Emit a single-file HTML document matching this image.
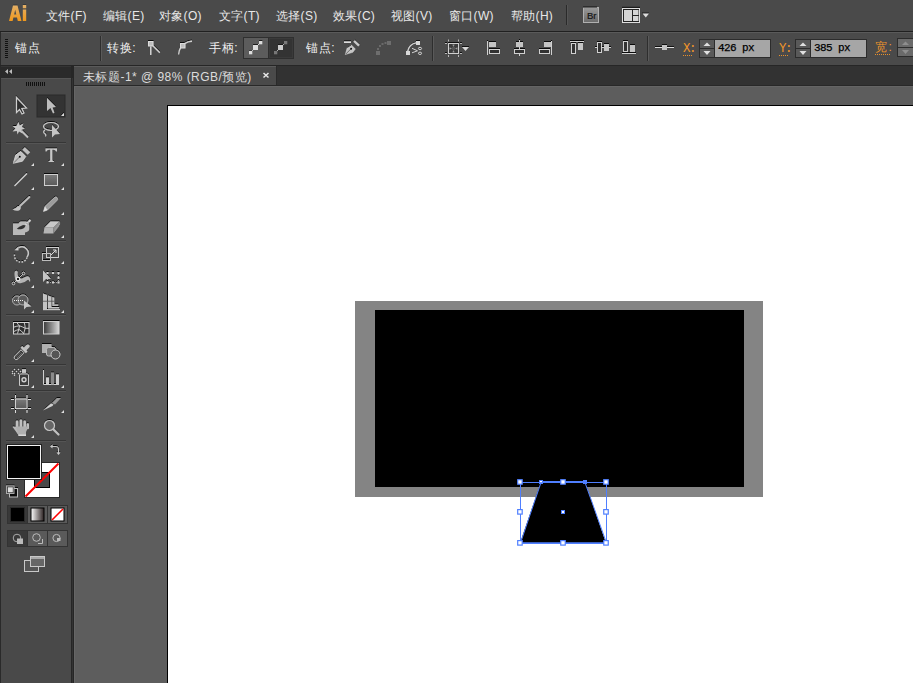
<!DOCTYPE html>
<html><head><meta charset="utf-8">
<style>
*{margin:0;padding:0;box-sizing:border-box}
html,body{width:913px;height:683px;overflow:hidden;background:#4a4a4a;font-family:"Liberation Sans",sans-serif;}
.a{position:absolute}
.t{position:absolute;font-size:12px;line-height:14px;color:#e8e8e8;white-space:nowrap}
.m{letter-spacing:0.3px}
.c{letter-spacing:0.6px}
svg{position:absolute;overflow:visible}
</style></head><body>
<!-- menu bar -->
<div class="a" style="left:0;top:0;width:913px;height:31px;background:#4a4a4a"></div>
<div class="a" style="left:0;top:31px;width:913px;height:1px;background:#202020"></div>
<svg style="left:0;top:0" width="40" height="30"><defs><linearGradient id="aig" x1="0" x2="0" y1="0" y2="1"><stop offset="0" stop-color="#e3b068"/><stop offset="1" stop-color="#f0981c"/></linearGradient></defs>
<path d="M9 4.5 H28 V5.5 H9 Z" fill="none"/>
<rect x="13" y="4.5" width="4.5" height="1" fill="#2a2e36" opacity="0.6"/><rect x="22.8" y="4" width="3.4" height="1" fill="#2a2e36" opacity="0.6"/>
<path fill-rule="evenodd" fill="url(#aig)" d="M9 21 L13 5.5 H17.5 L21.5 21 H17.8 L17 17.5 H13.4 L12.6 21 Z M14.1 14.6 H16.3 L15.2 9.8 Z M22.8 5 H26.2 V8.3 H22.8 Z M22.8 9.5 H26.2 V21 H22.8 Z"/></svg>
<div class="t m" style="left:46px;top:9px">文件(F)</div>
<div class="t m" style="left:103px;top:9px">编辑(E)</div>
<div class="t m" style="left:159px;top:9px">对象(O)</div>
<div class="t m" style="left:219px;top:9px">文字(T)</div>
<div class="t m" style="left:276px;top:9px">选择(S)</div>
<div class="t m" style="left:333px;top:9px">效果(C)</div>
<div class="t m" style="left:391px;top:9px">视图(V)</div>
<div class="t m" style="left:449px;top:9px">窗口(W)</div>
<div class="t m" style="left:511px;top:9px">帮助(H)</div>
<div class="a" style="left:566px;top:5px;width:1px;height:20px;background:#2a2a2a"></div>
<div class="a" style="left:567px;top:5px;width:1px;height:20px;background:#555"></div>


<svg style="left:0;top:0" width="913" height="31">
 <defs><linearGradient id="brg" x1="0" x2="0" y1="0" y2="1"><stop offset="0" stop-color="#9a9a9a"/><stop offset="1" stop-color="#6a6a6a"/></linearGradient></defs>
 <rect x="583.5" y="7.5" width="15" height="15" fill="url(#brg)" stroke="#b0b0b0" stroke-width="1"/>
 <text x="587" y="19" font-family="Liberation Sans" font-size="9.5" fill="#151515" stroke="#151515" stroke-width="0.2">Br</text><rect x="583" y="6.5" width="14" height="1" fill="#111"/><rect x="622" y="6.8" width="18" height="1" fill="#111"/><rect x="642" y="12.6" width="7" height="0.9" fill="#111"/>
 <rect x="622.5" y="8.5" width="17" height="14" fill="#222" stroke="#ddd" stroke-width="1"/>
 <rect x="624" y="10" width="8" height="11" fill="#d4d4d4"/>
 <rect x="633" y="10" width="5.5" height="5" fill="#d4d4d4"/>
 <rect x="633" y="16" width="5.5" height="5" fill="#d4d4d4"/>
 <path d="M642.5 13.5 H649 L645.75 17.5 Z" fill="#ddd"/>
</svg>

<!-- control bar -->
<div class="a" style="left:0;top:32px;width:913px;height:1px;background:#5a5a5a"></div>
<div class="a" style="left:0;top:33px;width:913px;height:32px;background:#4a4a4a"></div>
<div class="a" style="left:0;top:32px;width:1px;height:33px;background:#2a2a2a"></div>
<div class="a" style="left:0;top:65px;width:913px;height:1px;background:#262626"></div>


<!-- control bar content -->
<div class="a" style="left:5px;top:39px;width:3px;height:20px;background:repeating-linear-gradient(#111 0 1px,#4a4a4a 1px 2px)"></div>
<div class="t c" style="left:15px;top:40.5px;color:#f0f0f0">锚点</div>
<div class="a" style="left:100px;top:36px;width:1px;height:25px;background:#2e2e2e"></div>
<div class="a" style="left:101px;top:36px;width:1px;height:25px;background:#5a5a5a"></div>
<div class="t c" style="left:107px;top:40.5px;color:#f0f0f0">转换:</div>
<svg style="left:0;top:0" width="913" height="66">
 <g filter="url(#emb)">
 <!-- convert corner -->
 <rect x="148.5" y="41.5" width="4.5" height="4.5" fill="#bdbdbd" stroke="#dcdcdc" stroke-width="1"/>
 <rect x="150" y="46.5" width="1.5" height="8.5" fill="#d0d0d0"/>
 <line x1="153" y1="46" x2="159.8" y2="52.8" stroke="#d0d0d0" stroke-width="1.3"/>
 <!-- smooth -->
 <path d="M178.6 54.5 Q179 50 180.8 47.5" stroke="#d0d0d0" stroke-width="1.3" fill="none"/>
 <path d="M185 43.5 Q188 41.3 192 41.2" stroke="#d0d0d0" stroke-width="1.4" fill="none"/>
 <rect x="180.5" y="43.5" width="4.5" height="4.5" fill="#bdbdbd" stroke="#dcdcdc" stroke-width="1"/>
 </g>
 <!-- handles button group -->
 <rect x="243" y="37" width="51" height="22" fill="#2f2f2f"/>
 <rect x="244" y="38" width="24" height="20" fill="#5c5c5c"/>
 <rect x="269" y="38" width="24" height="20" fill="#333"/>
   <line x1="250" y1="53" x2="261" y2="42" stroke="#e6e6e6" stroke-width="0.9"/>
 <rect x="249" y="50.6" width="3.3" height="0.8" fill="#111"/>
 <rect x="253" y="44.2" width="5" height="0.8" fill="#111"/>
 <rect x="259" y="40.2" width="3.3" height="0.8" fill="#111"/>
 <rect x="249" y="51" width="3.3" height="3.3" fill="#ddd"/>
 <rect x="253" y="45" width="5" height="5" fill="#ddd"/>
 <rect x="259" y="41" width="3.3" height="3.3" fill="#ddd"/>
 <rect x="269.5" y="38.5" width="23" height="19" fill="none" stroke="#3a3a3a" stroke-width="1"/>
 <line x1="275" y1="53" x2="286" y2="42" stroke="#bbb" stroke-width="0.9"/>
 <rect x="278" y="44.2" width="5" height="0.8" fill="#111"/>
 <rect x="274" y="51" width="3.3" height="3.3" fill="#777"/>
 <rect x="278" y="45" width="5" height="5" fill="#ccc"/>
 <rect x="284" y="41" width="3.3" height="3.3" fill="#777"/>
<!-- pen add anchor -->
 <rect x="344" y="40.3" width="7" height="1" fill="#111"/>
 <rect x="344" y="41.3" width="7" height="1.7" fill="#dcdcdc"/>
 <path d="M345.3 54.5 L347.3 47.5 L351.2 44.8 L355.3 49 L352.8 52.3 Z" fill="#c4c4c4" stroke="#dedede" stroke-width="0.5"/>
 <path d="M347.3 47.5 L351.2 44.8" stroke="#111" stroke-width="0.8"/>
 <path d="M353 41.6 L354.8 39.6 L360.2 44.6 L358.2 46.5 Z" fill="#c8c8c8"/>
 <path d="M353 41.6 L354.8 39.6 M354.8 39.6 L360.2 44.6" stroke="#111" stroke-width="0.7" fill="none"/>
 <line x1="345.8" y1="54" x2="350.8" y2="49" stroke="#444" stroke-width="0.7"/>
 <circle cx="351.1" cy="48.7" r="1" fill="#111"/>
<!-- dashed curve disabled -->
 <rect x="376" y="51" width="4" height="4" fill="#6e6e6e"/>
 <rect x="387" y="41" width="4" height="4" fill="#6e6e6e"/>
 <rect x="377" y="48" width="2" height="2" fill="#6a6a6a"/>
 <rect x="379" y="45" width="2" height="2" fill="#6a6a6a"/>
 <rect x="381.5" y="43" width="2" height="2" fill="#6a6a6a"/>
 <rect x="384.5" y="42" width="2" height="2" fill="#6a6a6a"/>
<!-- cut path -->
 <path d="M407.8 51 Q409 44.5 416 42.8" stroke="#cfcfcf" stroke-width="1.1" fill="none"/>
 <path d="M407.8 50.2 Q409 43.5 416 42" stroke="#111" stroke-width="0.7" fill="none" opacity="0.8"/>
 <path d="M407.8 51 Q409 44.5 416 42.8" stroke="#cfcfcf" stroke-width="1.1" fill="none"/>
 <rect x="406" y="51" width="4" height="4" fill="#d8d8d8"/>
 <rect x="416" y="41" width="4" height="4" fill="#d8d8d8"/>
 <rect x="416" y="40" width="4" height="1" fill="#111"/>
 <path d="M412 48.3 L417.5 50.8 M412 52.8 L417.5 50.8" stroke="#d0d0d0" stroke-width="1"/>
 <ellipse cx="420" cy="48.5" rx="1.6" ry="1.2" stroke="#d0d0d0" fill="none" stroke-width="1"/>
 <ellipse cx="420" cy="53.3" rx="1.6" ry="1.2" stroke="#d0d0d0" fill="none" stroke-width="1"/>
<!-- transform -->
 <rect x="448" y="42" width="11" height="1" fill="#111"/>
 <rect x="448.5" y="43.5" width="10" height="10" fill="#3c3c3c" stroke="#cfcfcf" stroke-width="1"/>
 <rect x="452" y="47" width="3" height="3" fill="#555"/>
 <path d="M452.5 45h2 M453.5 45v1.5 M452.5 52h2 M453.5 50.5v1.5 M450 47.5v2 M450 48.5h1.5 M457 47.5v2 M455.5 48.5h1.5" stroke="#a8a8a8" stroke-width="0.8"/>
 <path d="M445 43.5h2 M460 43.5h2 M445 53.5h2 M460 53.5h2 M448.5 39.5v2 M458.5 39.5v2 M448.5 55v2 M458.5 55v2" stroke="#b8b8b8" stroke-width="1"/>
 <path d="M445 42.5h2 M460 42.5h2 M445 52.5h2 M460 52.5h2" stroke="#111" stroke-width="1"/>
 <rect x="462" y="46" width="7" height="1" fill="#111"/>
 <path d="M462 47 L469 47 L465.5 51 Z" fill="#d8d8d8"/>
<g filter="url(#emb)">
 <!-- align left -->
 <rect x="487" y="41" width="1" height="14" fill="#d0d0d0"/>
 <rect x="489" y="42" width="7" height="5" fill="#c4c4c4"/>
 <rect x="489.5" y="49.5" width="10" height="4" fill="#333" stroke="#d0d0d0" stroke-width="1"/>
 <!-- align hcenter -->
 <rect x="519" y="40" width="1" height="16" fill="#d0d0d0"/>
 <rect x="516" y="42" width="7" height="5" fill="#c4c4c4"/>
 <rect x="514.5" y="49.5" width="10" height="4" fill="#333" stroke="#d0d0d0" stroke-width="1"/>
 <!-- align right -->
 <rect x="551" y="41" width="1" height="14" fill="#d0d0d0"/>
 <rect x="544" y="42" width="7" height="5" fill="#c4c4c4"/>
 <rect x="539.5" y="49.5" width="10" height="4" fill="#333" stroke="#d0d0d0" stroke-width="1"/>
 <!-- align top -->
 <rect x="570" y="41" width="14" height="1" fill="#d0d0d0"/>
 <rect x="571.5" y="43.5" width="4" height="10" fill="#333" stroke="#d0d0d0" stroke-width="1"/>
 <rect x="578" y="43" width="5" height="7" fill="#c4c4c4"/>
 <!-- align vcenter -->
 <rect x="595" y="47" width="16" height="1" fill="#d0d0d0"/>
 <rect x="597.5" y="42.5" width="4" height="10" fill="#333" stroke="#d0d0d0" stroke-width="1"/>
 <rect x="604" y="44" width="5" height="7" fill="#c4c4c4"/>
 <!-- align bottom -->
 <rect x="622" y="53" width="14" height="1" fill="#d0d0d0"/>
 <rect x="623.5" y="41.5" width="4" height="10" fill="#333" stroke="#d0d0d0" stroke-width="1"/>
 <rect x="630" y="45" width="5" height="7" fill="#c4c4c4"/>
 </g>
 <!-- ref point -->
 <rect x="655" y="46" width="19" height="1" fill="#111"/>
 <rect x="655" y="47" width="19" height="1" fill="#e0e0e0"/>
 <rect x="662" y="44" width="5" height="1" fill="#111"/>
 <rect x="662" y="45" width="5" height="5" fill="#c4c4c4"/>
 <!-- X spinner -->
 <rect x="699" y="39" width="72" height="19" fill="#2c2c2c"/>
 <rect x="700" y="40" width="14" height="8" fill="#595959"/>
 <rect x="700" y="49" width="14" height="8" fill="#595959"/>
 <path d="M703.5 46 L710.5 46 L707 42.5 Z" fill="#e0e0e0"/>
 <path d="M703.5 51 L710.5 51 L707 55 Z" fill="#e0e0e0"/>
 <rect x="715" y="40" width="55" height="17" fill="#a6a6a6"/>
 <!-- Y spinner -->
 <rect x="795" y="39" width="72" height="19" fill="#2c2c2c"/>
 <rect x="796" y="40" width="14" height="8" fill="#595959"/>
 <rect x="796" y="49" width="14" height="8" fill="#595959"/>
 <path d="M799.5 46 L806.5 46 L803 42.5 Z" fill="#e0e0e0"/>
 <path d="M799.5 51 L806.5 51 L803 55 Z" fill="#e0e0e0"/>
 <rect x="811" y="40" width="55" height="17" fill="#a6a6a6"/>
  <!-- W spinner -->
 <rect x="897" y="38" width="17" height="19" fill="#2c2c2c"/>
 <rect x="898" y="39" width="15" height="8" fill="#6a6a6a"/>
 <rect x="898" y="48" width="15" height="8" fill="#6a6a6a"/>
 <path d="M902 45 L909 45 L905.5 41.5 Z" fill="#8e8e8e"/>
 <path d="M902 50 L909 50 L905.5 54 Z" fill="#8e8e8e"/>
<!-- orange dotted underlines -->
 <path d="M683 55.5h10 M779 55.5h10 M875 54.5h16" stroke="#e8902a" stroke-width="1" stroke-dasharray="1 1"/>
</svg>
<div class="t c" style="left:209px;top:40.5px;color:#f0f0f0">手柄:</div>
<div class="t c" style="left:306px;top:40.5px;color:#f0f0f0">锚点:</div>
<div class="a" style="left:432px;top:36px;width:1px;height:25px;background:#2e2e2e"></div>
<div class="a" style="left:433px;top:36px;width:1px;height:25px;background:#5a5a5a"></div>
<div class="a" style="left:647px;top:36px;width:1px;height:25px;background:#2e2e2e"></div>
<div class="a" style="left:648px;top:36px;width:1px;height:25px;background:#5a5a5a"></div>
<div class="t" style="left:683px;top:42px;color:#f0952a;font-family:'Liberation Mono',monospace;font-size:12.5px;letter-spacing:-1.6px">X:</div>
<div class="t" style="left:779px;top:42px;color:#f0952a;font-family:'Liberation Mono',monospace;font-size:12.5px;letter-spacing:-1.6px">Y:</div>
<div class="t" style="left:875px;top:40px;color:#f0952a;letter-spacing:1.5px">宽:</div>
<div class="t" style="left:718px;top:41px;color:#000;font-family:'Liberation Mono',monospace;font-size:11px;letter-spacing:-0.6px;-webkit-text-stroke:0.25px #000">426 px</div>
<div class="t" style="left:814px;top:41px;color:#000;font-family:'Liberation Mono',monospace;font-size:11px;letter-spacing:-0.6px;-webkit-text-stroke:0.25px #000">385 px</div>

<!-- tab bar -->
<div class="a" style="left:0;top:66px;width:913px;height:20px;background:#323232"></div>

<!-- left panel -->
<div class="a" style="left:0;top:66px;width:71px;height:617px;background:#494949"></div>
<div class="a" style="left:0;top:66px;width:1px;height:617px;background:#2a2a2a"></div>
<div class="a" style="left:1px;top:66px;width:70px;height:12px;background:#2a2a2a;border-top:1px solid #343434"></div><div class="a" style="left:1px;top:78px;width:70px;height:1px;background:#555"></div>
<div class="a" style="left:71px;top:66px;width:3px;height:617px;background:#262626"></div><div class="a" style="left:72px;top:78px;width:1px;height:605px;background:#333"></div>


<!-- toolbar content -->
<svg style="left:0;top:0" width="72" height="683">
<defs>
 <filter id="emb" x="-20%" y="-20%" width="140%" height="140%"><feOffset dy="-1" in="SourceAlpha" result="o"/><feFlood flood-color="#000" flood-opacity="0.85"/><feComposite in2="o" operator="in" result="s"/><feMerge><feMergeNode in="s"/><feMergeNode in="SourceGraphic"/></feMerge></filter>
 <linearGradient id="gr" x1="0" x2="1" y1="0" y2="0"><stop offset="0" stop-color="#3a3a3a"/><stop offset="1" stop-color="#d8d8d8"/></linearGradient>
 <linearGradient id="rg" x1="0" x2="0" y1="0" y2="1"><stop offset="0" stop-color="#7a7a7a"/><stop offset="1" stop-color="#5a5a5a"/></linearGradient>
 <linearGradient id="gw" x1="0" x2="1" y1="0" y2="0"><stop offset="0" stop-color="#fff"/><stop offset="1" stop-color="#2a2020"/></linearGradient>
</defs>
<!-- chevrons -->
<path d="M8 69 L5 71.5 L8 74 Z M12 69 L9 71.5 L12 74 Z" fill="#bbb"/>
<!-- grip -->

<path d="M26.5 82v4 M28.5 82v4 M30.5 82v4 M32.5 82v4 M34.5 82v4 M36.5 82v4 M38.5 82v4 M40.5 82v4 M42.5 82v4 M44.5 82v4" stroke="#111" stroke-width="1"/>
<!-- selected tool bg -->
<rect x="37" y="95" width="28" height="22" fill="#333" stroke="#2a2a2a" stroke-width="1"/>
<!-- separators -->
<g fill="#363636"><rect x="6" y="142" width="60" height="1"/><rect x="6" y="240" width="60" height="1"/><rect x="6" y="314" width="60" height="1"/><rect x="6" y="364" width="60" height="1"/><rect x="6" y="390" width="60" height="1"/><rect x="6" y="440" width="60" height="1"/></g><g fill="#555"><rect x="6" y="143" width="60" height="1"/><rect x="6" y="241" width="60" height="1"/><rect x="6" y="315" width="60" height="1"/><rect x="6" y="365" width="60" height="1"/><rect x="6" y="391" width="60" height="1"/><rect x="6" y="441" width="60" height="1"/></g>
<g filter="url(#emb)">
<!-- selection -->
<path d="M16.5 97.5 L16.5 112.5 L19.5 109.5 L22 114 L24 113 L21.8 108.5 L26.5 108 Z" fill="#2e2e2e" stroke="#cfcfcf" stroke-width="1.2" stroke-linejoin="miter"/>
<!-- direct selection -->
<path d="M47 98 L47 111 L50.5 108 L53 113.5 L54.5 112.8 L52.5 107.5 L56 107 Z" fill="#bdbdbd"/>
<path d="M61 116 L64 116 L64 113 Z" fill="#ddd"/>
<!-- magic wand -->
<path d="M18.5 122 L19.6 125.5 L23.5 123.5 L21.8 127 L25 128.5 L21.5 129.8 L22.5 133.5 L19 131.5 L17.5 134.5 L16.8 131 L12.5 131.5 L15.5 128.5 L12.5 126 L16.5 126 Z" fill="#c8c8c8"/>
<line x1="21.5" y1="131" x2="28" y2="137.5" stroke="#c0c0c0" stroke-width="1.8"/>
<!-- lasso -->
<ellipse cx="51" cy="126.5" rx="7.5" ry="4" fill="none" stroke="#c8c8c8" stroke-width="1.2"/>
<path d="M45 130 q-2.5 2 -0.5 3.5 q2 1 1 3" fill="none" stroke="#c8c8c8" stroke-width="1.1"/>
<path d="M52 125 L52 137.5 L55 134.5 L60 134 Z" fill="#c4c4c4"/>
<!-- pen -->
<path d="M13.3 163.3 L15.8 155 L20.8 151.5 L25.8 156.5 L22.5 161.2 Z" fill="#c0c0c0" stroke="#e0e0e0" stroke-width="0.7"/>
<path d="M22.3 149.7 L24.8 147.2 L30.2 152.2 L27.7 154.7 Z" fill="#bdbdbd"/>
<line x1="13.8" y1="162.8" x2="19.5" y2="157" stroke="#555" stroke-width="0.7"/>
<circle cx="19.8" cy="156.8" r="1" fill="#111"/>
<!-- type -->
<path d="M45.5 148.5 H57 V151.5 H56 Q55.5 149.8 53.5 149.8 H52.3 V160.3 Q52.3 161 54 161.2 V162 H48.5 V161.2 Q50.2 161 50.2 160.3 V149.8 H49 Q47 149.8 46.5 151.5 H45.5 Z" fill="#c8c8c8"/>
<!-- line -->
<line x1="14.5" y1="186" x2="27" y2="173.5" stroke="#cfcfcf" stroke-width="1.3"/>
<!-- rect -->
<rect x="44.5" y="174.5" width="13" height="11" fill="url(#rg)" stroke="#cfcfcf" stroke-width="1"/>
<!-- brush -->
<line x1="20" y1="206" x2="29.5" y2="197" stroke="#bdbdbd" stroke-width="1.8" stroke-linecap="round"/>
<path d="M12.5 209.5 Q16 208.5 18 206 L20.5 206.5 Q21.5 209 19 210.5 Q16 211.5 12.5 209.5 Z" fill="#c4c4c4"/>
<!-- pencil -->
<path d="M43.5 211.5 L45 206.5 L54.5 197.5 Q56 196.5 57 197.5 L57.5 198.5 Q58 199.5 57 200.5 L47.5 210 Z" fill="#9c9c9c" stroke="#ccc" stroke-width="0.6"/>
<path d="M43.5 211.5 L45 206.5 L47.5 210 Z" fill="#ddd"/>
<!-- blob brush -->
<path d="M13 223.5 H18.5 Q19.5 221.5 21 221.5 H26 Q29.2 222.5 29.2 226 V229.5 Q29 231.5 25 232.5 V235 H13 Z" fill="#b8b8b8"/>
<path d="M16.8 228.8 Q19 226.5 22.5 225.2 Q24.5 224.8 25.8 225.6 Q25 228 22 229 Q19 229.8 16.8 228.8 Z" fill="#333"/>
<path d="M25.5 225 L30.5 220" stroke="#cfcfcf" stroke-width="2"/>
<path d="M26.5 223 L28 224.5 M28 221.5 L29.5 223" stroke="#555" stroke-width="0.6"/>
<!-- eraser -->
<path d="M44.5 227.5 L50.5 221.5 H59.5 L53.5 227.5 Z" fill="#c8c8c8"/>
<path d="M43.5 233.5 L44.5 227.5 H53.5 V233.5 Z" fill="#b4b4b4"/>
<path d="M53.5 227.5 L59.5 221.5 Q60.5 222.5 60 224.5 L53.5 233.5 Z" fill="#8e8e8e"/>
<path d="M55 229.5 L59.5 224 M54.5 231.5 L59 226" stroke="#aaa" stroke-width="0.5"/>
<!-- rotate -->
<path d="M18.5 248 A6.3 6.3 0 0 1 27 257" fill="none" stroke="#c8c8c8" stroke-width="1.4"/>
<path d="M27 257.5 A6.3 6.3 0 0 1 14.7 254" fill="none" stroke="#c8c8c8" stroke-width="1.4" stroke-dasharray="1.6 1.3"/>
<path d="M14.5 250.2 L18.5 246.5 L18.5 250.5 Z" fill="#cfcfcf"/>
<!-- scale -->
<rect x="46.5" y="247.5" width="12" height="10" fill="#4a4a4a" stroke="#cfcfcf" stroke-width="1"/>
<rect x="42.5" y="253.5" width="8" height="7" fill="none" stroke="#bdbdbd" stroke-width="1"/>
<path d="M51 255 L56 250 M53 250 H56 V253" stroke="#dcdcdc" stroke-width="1" fill="none"/>
<!-- warp -->
<path d="M14.5 274 Q14.5 270.5 16.5 270.8 Q18.5 271.5 17.5 274 Q18.5 279.5 22 278.5 Q25.5 276.5 27.5 276.3 Q30.5 276.5 30.2 281.5 L29.2 281.5 Q29 279 27.5 280 Q23.5 284 18.5 283 Q14.5 281.5 14.5 274 Z" fill="#b4b4b4"/>
<line x1="13.5" y1="283.5" x2="23.5" y2="273.5" stroke="#ddd" stroke-width="0.8"/>
<circle cx="18" cy="279" r="1.8" fill="#222" stroke="#eee" stroke-width="1.1"/>
<circle cx="13.5" cy="283.5" r="1.3" fill="#333" stroke="#ddd" stroke-width="0.8"/>
<circle cx="23.5" cy="273.5" r="1.3" fill="#333" stroke="#ddd" stroke-width="0.8"/>
<!-- free transform -->
<rect x="47.5" y="273" width="11" height="9.5" fill="none" stroke="#bdbdbd" stroke-width="0.8" stroke-dasharray="1 1"/>
<g fill="#cfcfcf"><rect x="46.5" y="272" width="2" height="2"/><rect x="52" y="272" width="2" height="2"/><rect x="57.5" y="272" width="2" height="2"/><rect x="57.5" y="276.8" width="2" height="2"/><rect x="46.5" y="281.5" width="2" height="2"/><rect x="52" y="281.5" width="2" height="2"/><rect x="57.5" y="281.5" width="2" height="2"/></g>
<path d="M43 270.5 L43 282 L46 279 L51 279 Z" fill="#c4c4c4"/>
<!-- shape builder -->
<circle cx="17" cy="300.5" r="4.5" fill="#555" stroke="#b0b0b0" stroke-width="1"/>
<circle cx="23" cy="300" r="5" fill="#5a5a5a" stroke="#b0b0b0" stroke-width="1"/>
<path d="M14 300.5 H24" stroke="#eee" stroke-width="1" stroke-dasharray="1 1"/>
<path d="M24 300.5 L24 309.5 L26.5 307 L31.5 306.5 Z" fill="#c4c4c4"/>
<!-- perspective grid -->
<g fill="#c4c4c4">
<path d="M43 293.5 L47 295 V309 H43 Z"/>
<path d="M48 295.5 L51.4 296.8 V307 H48 Z"/>
<path d="M52.3 297 L54.3 297.8 V304.5 H52.3 Z"/>
<rect x="52.3" y="304.5" width="6" height="1.4"/>
<rect x="48" y="307" width="11.2" height="1.4"/>
<rect x="43" y="309" width="17" height="1.2"/>
</g>
<rect x="43" y="300.8" width="11.3" height="0.8" fill="#555"/>
<!-- mesh -->
<rect x="13.5" y="322.5" width="15.5" height="11.5" fill="#2e2e2e" stroke="#d0d0d0" stroke-width="1"/>
<path d="M17 322.5 Q18 325 19.5 325.8 Q23 327 25.2 328.3 H29 M13.5 327.2 Q17 326 19.5 325.8 M19.5 325.8 Q19 329.5 17.5 333.5 M13.5 331.7 Q17 329.8 19 329.5 Q21.5 330.5 23.5 333.5 M24.2 322.5 Q25 325 25.2 328.3 Q24.5 331 23.5 334" stroke="#d8d8d8" stroke-width="0.9" fill="none"/>
<!-- gradient -->
<rect x="43.5" y="321.5" width="15.5" height="12.5" fill="url(#gr)" stroke="#cfcfcf" stroke-width="1"/>
<!-- eyedropper -->
<path d="M14.2 358.2 Q14 356.8 15 355.8 L21 349.8 L24 352.8 L18 358.8 Q17 359.8 15.6 359.6 Z" fill="#3a3a3a" stroke="#d0d0d0" stroke-width="0.9"/>
<path d="M15.5 357 L20.5 352 M17 358 L22 353" stroke="#999" stroke-width="0.5"/>
<path d="M20.5 347.8 L22.2 346.1 L27.6 351.5 L25.9 353.2 Z" fill="#c4c4c4"/>
<path d="M23.5 348 L26.5 345 Q28 343.8 29.2 345 Q30.4 346.2 29.2 347.6 L26.2 350.6 Z" fill="#c0c0c0"/>
<!-- blend -->
<rect x="42" y="344" width="9.5" height="9" fill="#b0b0b0"/>
<rect x="46.5" y="347.5" width="9" height="8.5" rx="2" fill="#777" stroke="#bdbdbd" stroke-width="1"/>
<circle cx="55.5" cy="354.5" r="4.5" fill="#555" stroke="#c8c8c8" stroke-width="1"/>
<!-- symbol sprayer -->
<g fill="#d0d0d0"><circle cx="14.5" cy="369.6" r="0.75"/><circle cx="18.5" cy="369.6" r="0.75"/><circle cx="12.5" cy="371.5" r="0.75"/><circle cx="16.5" cy="371.5" r="0.75"/><circle cx="20.5" cy="371.5" r="0.75"/><circle cx="14.5" cy="373.4" r="0.75"/><circle cx="18.5" cy="373.4" r="0.75"/><circle cx="12.5" cy="373.4" r="0.75"/><circle cx="14.5" cy="375.2" r="0.75"/></g>
<rect x="22" y="369.2" width="4" height="3.7" fill="#c8c8c8"/>
<path d="M19.5 375 L20.5 374 H27.5 L28.5 375 V385.5 H19.5 Z" fill="#3a3a3a" stroke="#c8c8c8" stroke-width="1"/>
<circle cx="24" cy="379.8" r="2" fill="#444" stroke="#d0d0d0" stroke-width="1.4"/>
<!-- column graph -->
<path d="M43.5 370 V384.5 H59" stroke="#cfcfcf" stroke-width="1" fill="none"/>
<rect x="46" y="377.5" width="3" height="7" fill="#cfcfcf"/>
<rect x="51" y="372.5" width="3" height="12" fill="#8a8a8a"/>
<rect x="56" y="374.5" width="3" height="10" fill="#cfcfcf"/>
<!-- artboard -->
<rect x="15.5" y="399" width="11.5" height="9.5" fill="url(#rg)" stroke="#cfcfcf" stroke-width="1"/>
<path d="M11 399.5h3 M28 399.5h3 M11 408.5h3 M28 408.5h3 M15.5 395v3 M27 395v3 M15.5 410v3 M27 410v3" stroke="#dcdcdc" stroke-width="1"/>
<!-- slice -->
<path d="M43 410.5 L51 403.5 L53.5 404.5 L52.5 406 Z" fill="#cfcfcf"/>
<path d="M52 403 L57 398 H61 L55 404.5 Z" fill="#9a9a9a"/>
<!-- hand -->
<g fill="#c0c0c0">
<rect x="15.8" y="420.5" width="2.6" height="9" rx="1.3"/>
<rect x="19.6" y="419.5" width="2.6" height="9" rx="1.3"/>
<rect x="23.4" y="420.5" width="2.6" height="9" rx="1.3"/>
<rect x="26.6" y="423.3" width="2.4" height="6" rx="1.2"/>
<path d="M12.5 427 Q13.5 425.8 15 427 L18 430 H16.5 Z"/>
<path d="M16 426.5 H28.5 L26 432 V435 H18.5 L16 431 Z" fill="#b0b0b0"/>
<path d="M12.8 427.2 L16 426.8 L18.5 435 Z" fill="#b8b8b8"/>
<rect x="18.3" y="434.5" width="7.7" height="1.5" fill="#d8d8d8"/>
</g>
<!-- zoom -->
<line x1="53" y1="429" x2="58.5" y2="434.5" stroke="#c0c0c0" stroke-width="2.2" stroke-linecap="round"/>
<circle cx="49.5" cy="425.5" r="5" fill="#666" stroke="#c8c8c8" stroke-width="1.2"/>
<!-- swap -->
<path d="M51 446.5 H56 Q58.5 446.5 58.5 449 V453" fill="none" stroke="#c8c8c8" stroke-width="1"/>
<path d="M50 446.5 L52.5 444.5 V448.5 Z M58.5 455 L56.5 452.5 H60.5 Z" fill="#c8c8c8"/>
<!-- default fill stroke -->
<rect x="9.5" y="488.5" width="8" height="8.5" fill="#111" stroke="#bdbdbd" stroke-width="1"/>
<rect x="6.5" y="486" width="7.5" height="7.5" fill="#333" stroke="#aaa" stroke-width="1"/>
<rect x="7.8" y="487.3" width="5" height="5" fill="#e0e0e0"/>
</g>
<!-- triangles -->
<g fill="#e0e0e0">
<path d="M31 166 H34 V163 Z M61 166 H64 V163 Z M31 190 H34 V187 Z M61 190 H64 V187 Z M61 215 H64 V212 Z M61 238 H64 V235 Z
 M31 264 H34 V261 Z M61 264 H64 V261 Z M31 288 H34 V285 Z M31 313 H34 V310 Z M61 313 H64 V310 Z M31 362 H34 V359 Z
 M31 388 H34 V385 Z M61 388 H64 V385 Z M61 413 H64 V410 Z M31 438 H34 V435 Z"/>
</g>
<!-- stroke box -->
<rect x="24.5" y="462.5" width="35" height="35" fill="#fff" stroke="#2a2a2a" stroke-width="1"/>
<rect x="34.5" y="472.5" width="15" height="15" fill="#494949" stroke="#000" stroke-width="1"/>
<line x1="25.5" y1="496.5" x2="58.5" y2="463.5" stroke="#f00" stroke-width="2"/>
<!-- fill box -->
<rect x="6.5" y="444.5" width="35" height="35" fill="#f4f4f4" stroke="#222" stroke-width="1"/>
<rect x="8" y="446" width="32" height="32" fill="#000"/>
<!-- color mode buttons -->
<rect x="7" y="505" width="61" height="19" fill="#333"/>
<rect x="8" y="506" width="19" height="17" fill="#393939"/>
<rect x="28" y="506" width="19" height="17" fill="#5a5a5a"/>
<rect x="48" y="506" width="19" height="17" fill="#5a5a5a"/>
<rect x="10.5" y="507.5" width="14" height="14" fill="#000" stroke="#2a2a2a" stroke-width="1"/>
<rect x="31" y="508" width="13" height="13" fill="url(#gw)" stroke="#000" stroke-width="1"/>
<rect x="51" y="508" width="13" height="13" fill="#fff" stroke="#000" stroke-width="1"/>
<line x1="52" y1="520" x2="63" y2="509" stroke="#f00" stroke-width="1.6"/>
<!-- draw mode buttons -->
<rect x="7" y="530" width="61" height="17" fill="#333"/>
<rect x="8" y="531" width="19" height="15" fill="#393939"/>
<rect x="28" y="531" width="19" height="15" fill="#5a5a5a"/>
<rect x="48" y="531" width="19" height="15" fill="#5a5a5a"/>
<circle cx="17" cy="538" r="3.8" fill="none" stroke="#aaa" stroke-width="1"/>
<rect x="17" y="538.5" width="6" height="5.5" fill="#bbb"/>
<circle cx="36.5" cy="537.5" r="3.8" fill="none" stroke="#bbb" stroke-width="1"/>
<path d="M38 543.5 H42.5 V539" fill="none" stroke="#bbb" stroke-width="1"/>
<circle cx="56.5" cy="538" r="3.6" fill="none" stroke="#bbb" stroke-width="1"/>
<rect x="57" y="538" width="3.5" height="3" fill="#bbb"/>
<!-- screen mode -->
<rect x="24.5" y="560.5" width="14" height="11" fill="#555" stroke="#c8c8c8" stroke-width="1"/>
<rect x="30.5" y="556.5" width="14" height="10" fill="#666" stroke="#c8c8c8" stroke-width="1"/>
<rect x="31" y="557" width="13" height="2" fill="#aaa"/>
</svg>

<!-- canvas -->
<div class="a" style="left:74px;top:86px;width:839px;height:597px;background:#5d5d5d;border-left:1px solid #666;border-top:1px solid #656565"></div>
<div class="a" style="left:74px;top:85px;width:839px;height:1px;background:#282828"></div>
<!-- tab -->
<div class="a" style="left:74px;top:66px;width:202px;height:19px;background:#4a4a4a;border-top:1px solid #5a5a5a"></div>
<div class="a" style="left:276px;top:66px;width:1px;height:19px;background:#2a2a2a"></div>
<div class="t" style="left:83px;top:69.5px;color:#dcdcdc;letter-spacing:0.47px">未标题-1* @ 98% (RGB/预览)</div>
<svg style="left:0;top:0" width="300" height="90"><path d="M263.5 73 L268.5 77.5 M268.5 73 L263.5 77.5" stroke="#e8e8e8" stroke-width="1.5"/></svg>

<!-- artboard -->
<div class="a" style="left:167px;top:105px;width:746px;height:578px;background:#fff;border-left:1px solid #000;border-top:1px solid #000"></div>

<!-- monitor -->
<div class="a" style="left:355px;top:300.5px;width:408px;height:196px;background:#848484"></div>
<div class="a" style="left:375px;top:310px;width:369px;height:177px;background:#000"></div>

<svg style="left:0;top:0" width="913" height="683">
  <polygon points="541,482 585,482 606,543 520,543" fill="#000"/>
  <g stroke="#4f7fff" fill="none" stroke-width="1">
   <rect x="520.5" y="482.5" width="86" height="61"/>
   <path d="M541 482.5 L520.5 543 M585 482.5 L606.5 543"/>
   <path d="M541 482 H585" stroke-width="2"/>
   <path d="M520.5 543 H606.5" stroke-width="1.6"/>
  </g>
  <g fill="#fff" stroke="#4f7fff" stroke-width="1.2"><rect x="517.7" y="479.7" width="4.5" height="4.5"/><rect x="560.75" y="479.7" width="4.5" height="4.5"/><rect x="603.75" y="479.7" width="4.5" height="4.5"/><rect x="517.7" y="509.6" width="4.5" height="4.5"/><rect x="603.75" y="509.6" width="4.5" height="4.5"/><rect x="517.7" y="540.6" width="4.5" height="4.5"/><rect x="560.75" y="540.6" width="4.5" height="4.5"/><rect x="603.75" y="540.6" width="4.5" height="4.5"/><rect x="561.5" y="510.5" width="3" height="3" stroke-width="1"/></g>
  <rect x="539" y="480" width="4" height="4" fill="#4f7fff"/>
  <rect x="540" y="481" width="2" height="1.2" fill="#fff"/>
  <rect x="583" y="480" width="4" height="4" fill="#4f7fff"/>
</svg>
</body></html>
